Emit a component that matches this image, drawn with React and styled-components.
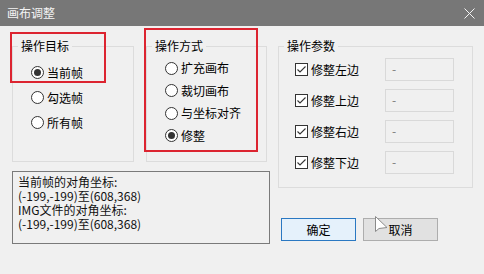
import React from 'react';
import styled, { createGlobalStyle } from 'styled-components';

const GlobalStyle = createGlobalStyle`
  html, body {
    margin: 0;
    padding: 0;
    background: #f0f0f0;
  }
  * {
    box-sizing: border-box;
  }
`;

const Window = styled.div`
  position: relative;
  width: 484px;
  height: 274px;
  background: #f0f0f0;
  font-family: "Noto Sans CJK SC", "Microsoft YaHei", sans-serif;
  font-size: 12px;
  color: #000;
  overflow: hidden;
`;

const TitleBar = styled.div`
  height: 26px;
  background: #777777;
  color: #f4f4f4;
  display: flex;
  align-items: center;
  justify-content: space-between;
  padding: 0 9px 0 7px;
  font-size: 12px;
  line-height: 26px;
`;

const Body = styled.div`
  display: grid;
  grid-template-columns: 258px 195px;
  column-gap: 8px;
  padding: 12px 0 0 12px;
`;

const Column = styled.div`
  display: flex;
  flex-direction: column;
`;

const GroupRow = styled.div`
  display: flex;
  gap: 12px;
`;

const Group = styled.fieldset`
  margin: 0;
  width: ${p => p.$width}px;
  height: ${p => p.$height}px;
  border: 1px solid #dcdcdc;
  padding: 0;
  min-width: 0;
`;

const Legend = styled.legend`
  margin-left: 5px;
  padding: 0 3px;
  line-height: 16px;
  font-size: 12px;
`;

const Options = styled.div`
  display: flex;
  flex-direction: column;
  padding: ${p => p.$padTop}px 0 0 ${p => p.$padLeft}px;
`;

const OptionRow = styled.div`
  display: flex;
  align-items: center;
  height: ${p => p.$height}px;
  gap: 3px;
  line-height: 14px;
`;

const Radio = styled.span`
  width: 13px;
  height: 13px;
  border-radius: 50%;
  border: 1px solid #333;
  background: #fff;
  display: flex;
  align-items: center;
  justify-content: center;
  flex: 0 0 13px;

  &::after {
    content: '';
    width: 7px;
    height: 7px;
    border-radius: 50%;
    background: ${p => (p.$checked ? '#333' : 'transparent')};
  }
`;

const CheckBox = styled.span`
  width: 13px;
  height: 13px;
  border: 1px solid #333;
  background: #fff;
  flex: 0 0 13px;
  display: flex;
`;

const CheckLabel = styled.span`
  width: 71px;
`;

const ValueField = styled.div`
  width: 69px;
  height: 23px;
  border: 1px solid #d9d9d9;
  background: #f0f0f0;
  color: #7a7a7a;
  padding: 0 6px;
  line-height: 19px;
  font-size: 12px;
`;

const InfoBox = styled.div`
  margin-top: 9px;
  width: 258px;
  height: 73px;
  border: 1px solid #7a7a7a;
  padding: 3px 5px;
  line-height: 14px;
  font-size: 12px;
  color: #111;
`;

const ButtonRow = styled.div`
  display: flex;
  gap: 7px;
  margin-top: 30px;
  padding-left: 3px;
`;

const Button = styled.div`
  width: 75px;
  height: 23px;
  display: flex;
  align-items: center;
  justify-content: center;
  font-size: 12px;
  border: 1px solid ${p => (p.$primary ? '#2a78c2' : '#adadad')};
  background: ${p => (p.$primary ? '#e5f1fb' : '#e1e1e1')};
`;

const Highlight = styled.div`
  position: absolute;
  left: ${p => p.$x}px;
  top: ${p => p.$y}px;
  width: ${p => p.$w}px;
  height: ${p => p.$h}px;
  border: 2px solid #dc2430;
  pointer-events: none;
`;

const Cursor = styled.svg`
  position: absolute;
  left: 375px;
  top: 216px;
`;

const CheckMark = () => (
  <svg width="11" height="11" viewBox="0 0 11 11">
    <polyline points="1.5,5.5 4,8 9.5,2.5" fill="none" stroke="#333" strokeWidth="1.1" />
  </svg>
);

const CloseIcon = () => (
  <svg width="11" height="11" viewBox="0 0 11 11">
    <path d="M0.5 0.5 L10.5 10.5 M10.5 0.5 L0.5 10.5" stroke="#f4f4f4" strokeWidth="1" />
  </svg>
);

const targets = [
  { label: '当前帧', checked: true },
  { label: '勾选帧' },
  { label: '所有帧' },
];

const modes = [
  { label: '扩充画布' },
  { label: '裁切画布' },
  { label: '与坐标对齐' },
  { label: '修整', checked: true },
];

const edges = ['修整左边', '修整上边', '修整右边', '修整下边'];

export default function App() {
  return (
    <>
      <GlobalStyle />
      <Window>
        <TitleBar>
          <span>画布调整</span>
          <CloseIcon />
        </TitleBar>

        <Body>
          <Column>
            <GroupRow>
              <Group $width={122} $height={124}>
                <Legend>操作目标</Legend>
                <Options $padTop={6} $padLeft={18}>
                  {targets.map(t => (
                    <OptionRow key={t.label} $height={25}>
                      <Radio $checked={t.checked} />
                      {t.label}
                    </OptionRow>
                  ))}
                </Options>
              </Group>
              <Group $width={121} $height={124}>
                <Legend>操作方式</Legend>
                <Options $padTop={3} $padLeft={18}>
                  {modes.map(m => (
                    <OptionRow key={m.label} $height={22.5}>
                      <Radio $checked={m.checked} />
                      {m.label}
                    </OptionRow>
                  ))}
                </Options>
              </Group>
            </GroupRow>
            <InfoBox>
              当前帧的对角坐标:<br />
              (-199,-199)至(608,368)<br />
              IMG文件的对角坐标:<br />
              (-199,-199)至(608,368)
            </InfoBox>
          </Column>

          <Column>
            <Group $width={195} $height={150}>
              <Legend>操作参数</Legend>
              <Options $padTop={0} $padLeft={16}>
                {edges.map(e => (
                  <OptionRow key={e} $height={31}>
                    <CheckBox><CheckMark /></CheckBox>
                    <CheckLabel>{e}</CheckLabel>
                    <ValueField>-</ValueField>
                  </OptionRow>
                ))}
              </Options>
            </Group>
            <ButtonRow>
              <Button $primary>确定</Button>
              <Button>取消</Button>
            </ButtonRow>
          </Column>
        </Body>

        <Highlight $x={10} $y={32} $w={96} $h={51} />
        <Highlight $x={144} $y={28} $w={114} $h={124} />

        <Cursor width="13" height="19" viewBox="0 0 13 19">
          <path d="M0.5 0.5 L0.5 15.5 L4 12.5 L12 11.5 Z" fill="#fff" stroke="#8a8a8a" strokeWidth="1" />
        </Cursor>
      </Window>
    </>
  );
}
